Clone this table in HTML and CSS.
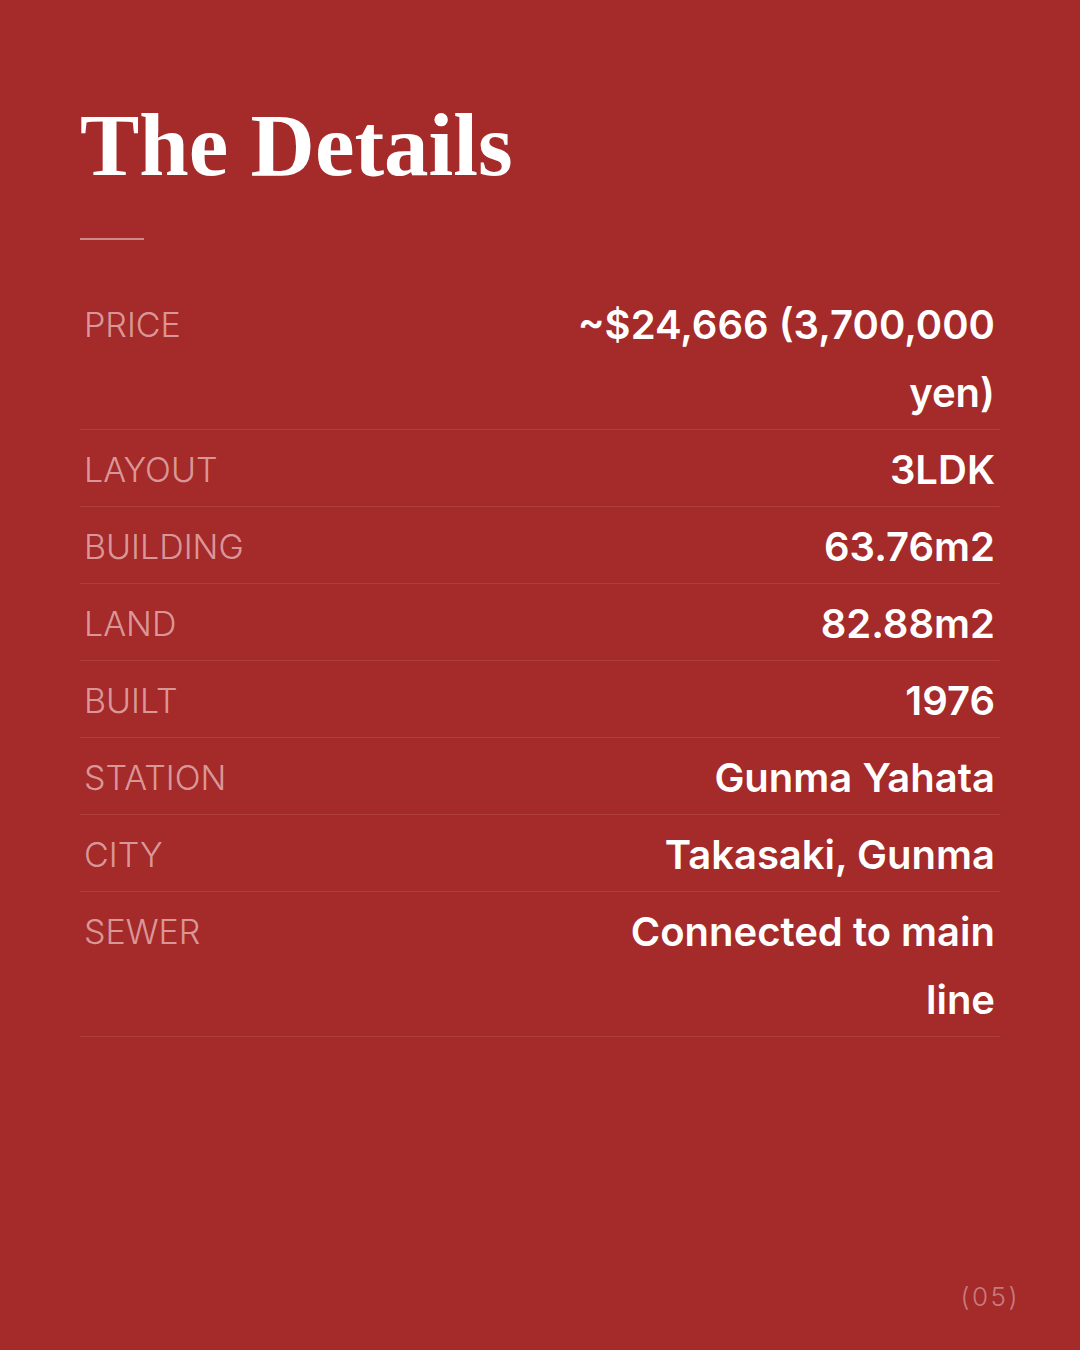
FILE: index.html
```html
<!DOCTYPE html>
<html lang="en">

<head>
    <meta charset="UTF-8">
    <meta name="viewport" content="width=device-width, initial-scale=1.0">
    <title>The Details</title>
    <link rel="stylesheet" href="styles.css">
</head>

<body>
    <div class="page">
        <h1 class="title">The Details</h1>
        <div class="rule"></div>
        <ul class="details">
            <li><span class="label">Price</span><span class="value">~$24,666 (3,700,000 yen)</span></li>
            <li><span class="label">Layout</span><span class="value">3LDK</span></li>
            <li><span class="label">Building</span><span class="value">63.76m2</span></li>
            <li><span class="label">Land</span><span class="value">82.88m2</span></li>
            <li><span class="label">Built</span><span class="value">1976</span></li>
            <li><span class="label">Station</span><span class="value">Gunma Yahata</span></li>
            <li><span class="label">City</span><span class="value">Takasaki, Gunma</span></li>
            <li><span class="label">Sewer</span><span class="value">Connected to main line</span></li>
        </ul>
        <p class="pager">(05)</p>
    </div>
</body>

</html>
```

FILE: styles.css
```css
* {
    margin: 0;
    padding: 0;
    box-sizing: border-box;
}

ul,
li {
    list-style: none;
}

body {
    background: #a52a2a;
    font-family: Inter, "Noto Sans", sans-serif;
    color: #fff;
}

.page {
    height: 1350px;
    padding: 101px 60px 38px 80px;
    display: flex;
    flex-direction: column;
}

.title {
    font-family: "Liberation Serif", serif;
    font-weight: bold;
    font-size: 89px;
    line-height: 1;
}

.rule {
    width: 64px;
    height: 2px;
    margin-top: 48px;
    background: rgba(255, 255, 255, 0.45);
}

.details {
    margin-top: 45px;
    width: 920px;
}

.details li {
    display: grid;
    grid-template-columns: 1fr 430px;
    align-items: start;
    padding: 6px 5px 2px 4px;
    border-bottom: 1px solid rgba(255, 255, 255, 0.1);
}

.label {
    font-weight: 300;
    font-size: 34px;
    line-height: 68px;
    text-transform: uppercase;
    color: rgba(255, 225, 225, 0.62);
}

.value {
    font-weight: 600;
    font-size: 40px;
    line-height: 68px;
    text-align: right;
}

.pager {
    margin-top: auto;
    align-self: flex-end;
    font-weight: 300;
    font-size: 26px;
    letter-spacing: 2.5px;
    color: rgba(255, 255, 255, 0.4);
}
```
